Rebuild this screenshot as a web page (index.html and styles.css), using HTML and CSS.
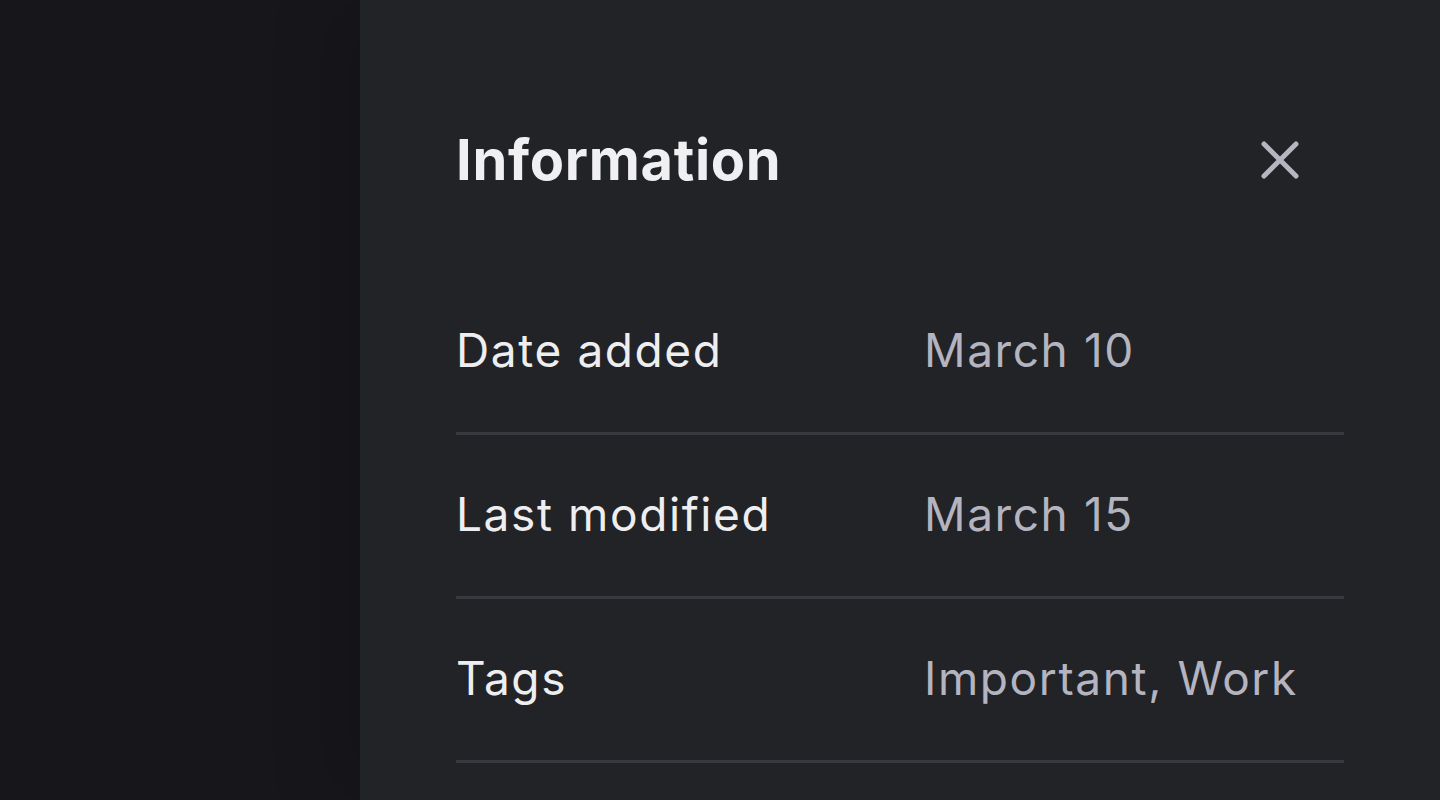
FILE: index.html
```html
<!DOCTYPE html>
<html lang="en">
<head>
<meta charset="utf-8">
<title>Information</title>
<link rel="stylesheet" href="styles.css">
</head>
<body>
<div class="app">
  <div class="backdrop"></div>
  <aside class="panel">
    <header class="panel-header">
      <h1 class="panel-title">Information</h1>
      <button class="close-btn" aria-label="Close">
        <svg width="40" height="40" viewBox="0 0 40 40" fill="none" stroke="currentColor" stroke-width="5" stroke-linecap="round">
          <path d="M4 4 L36 36 M36 4 L4 36"/>
        </svg>
      </button>
    </header>
    <dl class="info-list">
      <div class="info-row">
        <dt class="info-label">Date added</dt>
        <dd class="info-value">March 10</dd>
      </div>
      <div class="info-row">
        <dt class="info-label">Last modified</dt>
        <dd class="info-value">March 15</dd>
      </div>
      <div class="info-row">
        <dt class="info-label">Tags</dt>
        <dd class="info-value">Important, Work</dd>
      </div>
    </dl>
  </aside>
</div>
</body>
</html>
```

FILE: styles.css
```css
* { box-sizing: border-box; }
html, body {
  margin: 0;
  padding: 0;
  height: 100%;
  background: #17161b;
  font-family: Inter, "Noto Sans", "Liberation Sans", sans-serif;
  overflow: hidden;
}
.app {
  display: flex;
  height: 800px;
  width: 1440px;
}
.backdrop {
  width: 360px;
  flex: none;
  background: #17161b;
}
.panel {
  flex: 1;
  background: #222326;
  padding: 124px 96px 0 96px;
  box-shadow: -30px 0 60px rgba(0, 0, 0, 0.12);
}
.panel-header {
  display: flex;
  align-items: center;
  justify-content: space-between;
  height: 72px;
}
.panel-title {
  margin: 0;
  font-size: 56px;
  font-weight: 700;
  color: #f0f0f2;
  letter-spacing: 0.7px;
  line-height: 72px;
}
.close-btn {
  width: 64px;
  height: 64px;
  margin-right: 32px;
  display: flex;
  align-items: center;
  justify-content: center;
  background: none;
  border: 0;
  padding: 0;
  color: #b6b6c2;
}
.info-list {
  margin: 75px 0 0 0;
  padding: 0;
}
.info-row {
  display: grid;
  grid-template-columns: 468px 1fr;
  align-items: center;
  height: 164px;
  padding-bottom: 4px;
  border-bottom: 3px solid #38383e;
}
.info-label, .info-value {
  margin: 0;
  font-size: 46px;
  line-height: 56px;
  letter-spacing: 1.6px;
}
.info-label {
  color: #eeeef0;
}
.info-value {
  color: #b4b4c0;
}
```
